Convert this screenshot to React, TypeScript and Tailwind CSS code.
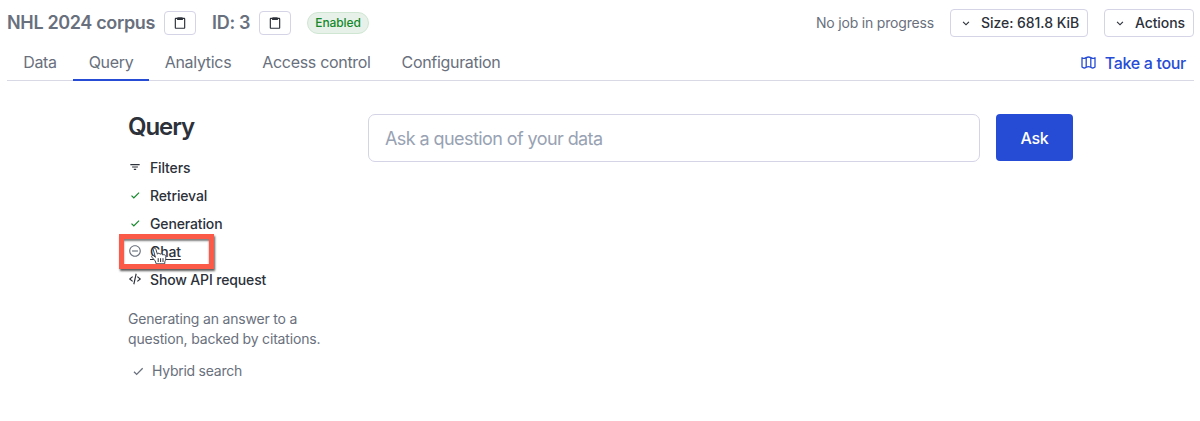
import type { ReactNode } from "react";
import { BiClipboard, BiChevronDown, BiFilter, BiCheck, BiCodeAlt, BiMinusCircle } from "react-icons/bi";

function CopyButton() {
  return (
    <button aria-label="Copy" className="flex h-6 w-8 items-center justify-center rounded-[4px] border border-[#d5d3e6] text-[#2c313a]">
      <BiClipboard size={14} />
    </button>
  );
}

function Tab({ label, width, active }: { label: string; width: string; active?: boolean }) {
  return (
    <a className={`-mb-px flex h-[34px] shrink-0 justify-center whitespace-nowrap border-b-2 pt-[3px] text-[16px] leading-6 tracking-[-0.31px] ${width} ${active ? "border-[#264cd6]" : "border-transparent"}`}>
      {label}
    </a>
  );
}

function Option({ icon, children }: { icon: ReactNode; children: ReactNode }) {
  return (
    <li className="flex h-7 items-center">
      <span className="flex w-[14px] justify-center">{icon}</span>
      <span className="ml-2 whitespace-nowrap text-[14px] font-medium tracking-[-0.14px] text-[#2c313a]">{children}</span>
    </li>
  );
}

function MapIcon() {
  return (
    <svg className="mr-[9px]" width="15" height="16" viewBox="0 0 15 16" fill="none" stroke="currentColor" strokeWidth="1.3" strokeLinejoin="round">
      <path d="M1 2.7C2.3 3.7 3.8 3.6 5.2 2.6 6.7 1.8 8.3 1.8 9.8 2.6 11.2 3.6 12.7 3.7 14 2.7V12C12.7 13.2 11.2 13.2 9.8 12.2 8.3 11.4 6.7 11.4 5.2 12.2 3.8 13.2 2.3 13.2 1 12Z" />
      <path d="M5.2 2.6v9.6M9.8 2.6v9.6" />
    </svg>
  );
}

function HandCursor() {
  return (
    <svg className="absolute left-[150px] top-[246px]" width="18" height="20" viewBox="0 0 18 20">
      <path
        d="M6.2 17.8 5.2 14.9 1.9 11.2C1 9.8 2.5 8.8 3.7 9.8L5.4 11.3 3.4 4.1C3 2 5.3 1.4 5.9 3.3L7.4 8.2C7.8 6.9 9.6 6.9 10 8.3 10.8 7.3 12.4 7.6 12.7 9 14 8.1 15.8 9 15.8 10.6 15.8 13 15.6 14.3 14.9 15.5L14.7 17.8Z"
        fill="#fff"
        stroke="#3c4048"
        strokeWidth="1"
        strokeLinejoin="round"
      />
      <path d="M8.2 12.2v3.8M10.6 12.2v3.8M13 12.2v3.8" stroke="#2c313a" strokeWidth="1" />
    </svg>
  );
}

export default function App() {
  return (
    <div className="relative h-[421px] w-[1200px] overflow-hidden bg-white font-['Inter','Liberation_Sans',sans-serif] text-[#69707d]">
      <header className="flex h-[45px] items-center pl-[7px] pr-[6px]">
        <h1 className="mr-[8px] w-[149px] shrink-0 whitespace-nowrap text-[18px] font-semibold tracking-[-0.35px]">NHL 2024 corpus</h1>
        <CopyButton />
        <h2 className="ml-[16px] mr-[8px] w-[39px] shrink-0 whitespace-nowrap text-[18px] font-semibold tracking-[-0.3px]">ID: 3</h2>
        <CopyButton />
        <span className="ml-[16px] flex h-[22px] w-[62px] items-center justify-center rounded-full border border-[#cfe6d2] bg-[#e8f1e9] text-[12px] font-medium tracking-[-0.1px] text-[#15882b]">Enabled</span>
        <span className="ml-auto mr-[16px] whitespace-nowrap text-[14px] tracking-[-0.18px]">No job in progress</span>
        <button className="flex h-7 w-[138px] shrink-0 items-center whitespace-nowrap rounded-[4px] border border-[#d5d3e6] pl-[8px] text-[14px] font-medium tracking-[-0.05px] text-[#2c313a]">
          <BiChevronDown size={14} className="mr-2" />
          Size: 681.8 KiB
        </button>
        <button className="ml-4 flex h-7 w-[90px] shrink-0 items-center whitespace-nowrap rounded-[4px] border border-[#d5d3e6] pl-[8px] text-[14px] font-medium tracking-[-0.1px] text-[#2c313a]">
          <BiChevronDown size={14} className="mr-2" />
          Actions
        </button>
      </header>
      <nav className="ml-[7px] mr-[6px] flex h-[36px] border-b border-[#d9d9e5] pt-[2px]">
        <Tab label="Data" width="w-[66px]" />
        <Tab label="Query" width="w-[76px]" active />
        <Tab label="Analytics" width="w-[98px]" />
        <Tab label="Access control" width="w-[139px]" />
        <Tab label="Configuration" width="w-[130px]" />
        <a className="ml-auto mr-[8px] flex h-[32px] items-center whitespace-nowrap text-[16px] font-medium tracking-[-0.32px] text-[#264cd6]">
          <MapIcon />
          Take a tour
        </a>
      </nav>
      <main className="flex pl-[128px] pt-[32px]">
        <aside className="w-[240px] shrink-0">
          <h2 className="text-[24px] font-semibold leading-[28px] tracking-[-1.1px] text-[#2c313a]">Query</h2>
          <ul className="mt-[12px]">
            <Option icon={<BiFilter size={14} className="text-[#2c313a]" />}>Filters</Option>
            <Option icon={<BiCheck size={14} className="text-[#15882b]" />}>Retrieval</Option>
            <Option icon={<BiCheck size={14} className="text-[#15882b]" />}>Generation</Option>
            <Option icon={<BiMinusCircle size={14} />}><span className="underline underline-offset-2">Chat</span></Option>
            <Option icon={<BiCodeAlt size={14} className="text-[#2c313a]" />}>Show API request</Option>
          </ul>
          <p className="mt-[16px] whitespace-nowrap text-[14px] leading-[19.5px] tracking-[-0.18px]">Generating an answer to a<br />question, backed by citations.</p>
          <div className="mt-[13px] flex items-center pl-[2px] text-[14px] leading-5 tracking-[-0.25px]">
            <BiCheck size={16} className="mr-[6px]" />
            Hybrid search
          </div>
        </aside>
        <input placeholder="Ask a question of your data" className="mt-px h-[48px] w-[612px] shrink-0 rounded-[7px] border border-[#d5d3e6] px-4 text-[18px] tracking-[-0.58px] placeholder:text-[#98a2b3]" />
        <button className="ml-4 mt-px h-[47px] w-[77px] shrink-0 rounded-[4px] bg-[#264cd6] text-[16px] font-medium tracking-[-0.2px] text-white">Ask</button>
      </main>
      <HandCursor />
      <div className="absolute left-[119px] top-[234px] h-[35px] w-[95px] border-[5px] border-[#fc5a48] shadow-[1px_2px_2px_rgba(0,0,0,.65),inset_0_2px_2px_rgba(0,0,0,.5)]" />
    </div>
  );
}
